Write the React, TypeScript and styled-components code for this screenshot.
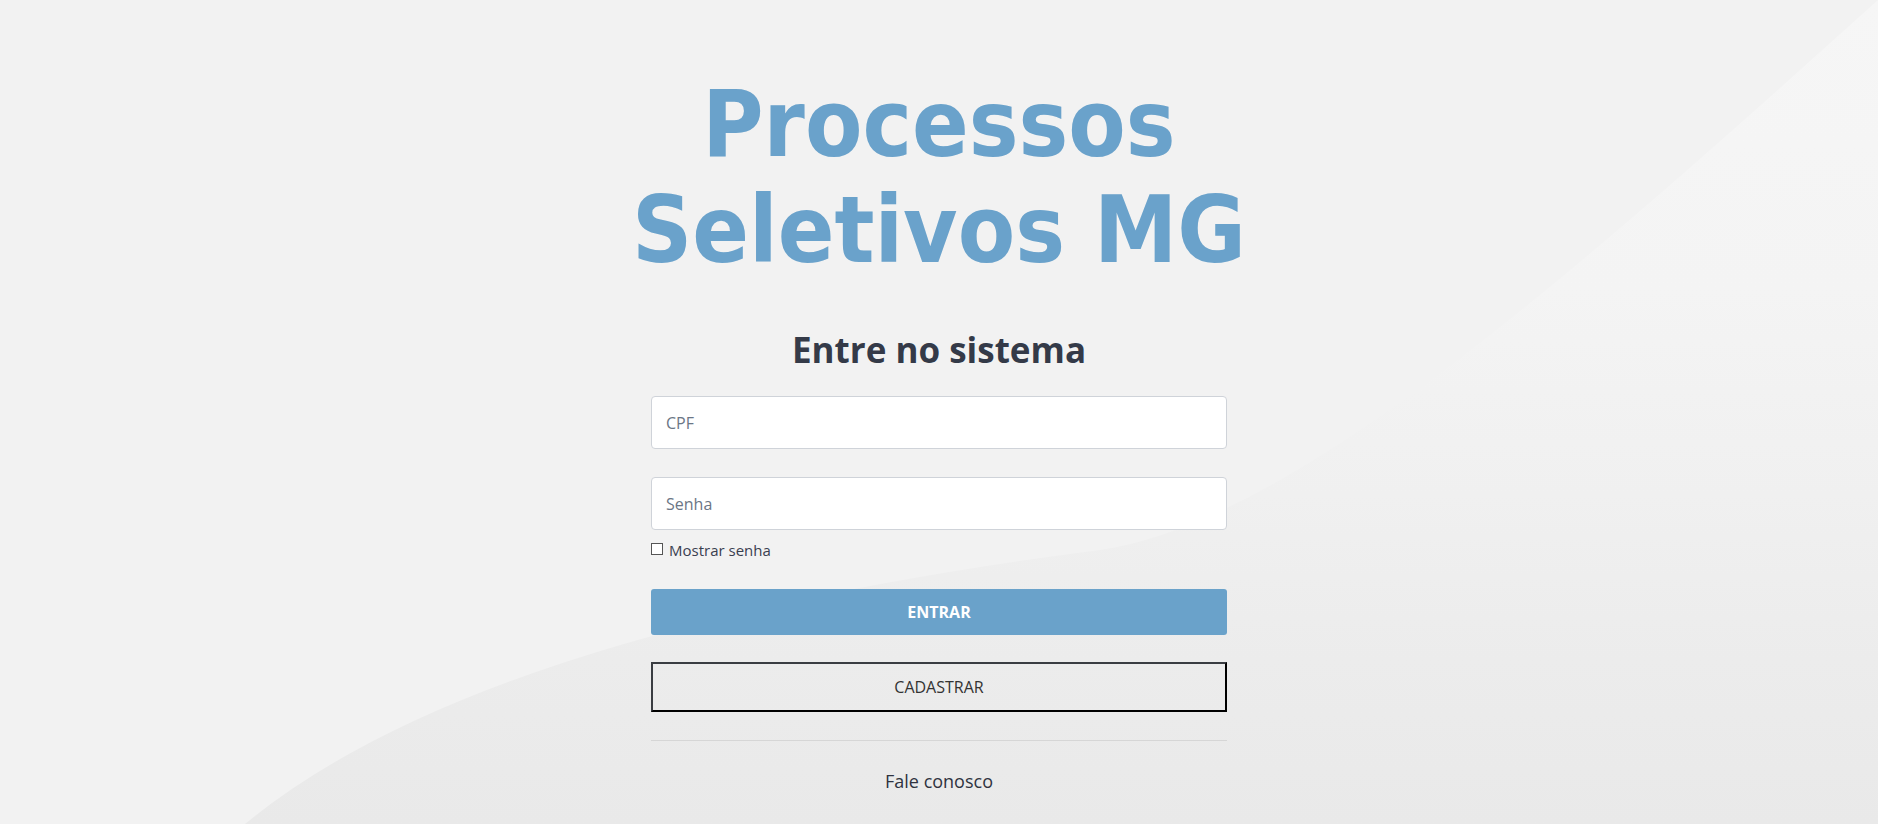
import React, { useState } from 'react';
import styled, { createGlobalStyle } from 'styled-components';

const GlobalStyle = createGlobalStyle`
  * {
    box-sizing: border-box;
  }
  html, body {
    margin: 0;
    padding: 0;
  }
  body {
    background: #f2f2f2;
    font-family: 'Open Sans', 'Liberation Sans', sans-serif;
    color: #333;
  }
`;

const Page = styled.div`
  position: relative;
  min-height: 100vh;
  overflow: hidden;
  background: #f2f2f2;
`;

const Wave = styled.svg`
  position: absolute;
  left: 0;
  top: 0;
  width: 100%;
  height: 100%;
  z-index: 0;
`;

const Content = styled.main`
  position: relative;
  z-index: 1;
  display: flex;
  flex-direction: column;
  align-items: center;
  padding-top: 71px;
`;

const Title = styled.h1`
  margin: 0;
  font-family: 'DejaVu Sans Condensed', 'DejaVu Sans', sans-serif;
  font-stretch: condensed;
  font-weight: 700;
  font-size: 93px;
  line-height: 106px;
  color: #6aa2cb;
  text-align: center;
`;

const Form = styled.form`
  width: 576px;
  display: flex;
  flex-direction: column;
  margin-top: 45px;
`;

const Heading = styled.h2`
  margin: 0 0 25px;
  font-size: 35px;
  line-height: 43px;
  font-weight: 700;
  color: #343a48;
  text-align: center;
`;

const Input = styled.input<{ $gap?: number }>`
  height: 53px;
  width: 100%;
  margin-top: ${(p) => p.$gap ?? 0}px;
  padding: 0 14px;
  border: 1px solid #cfd3d9;
  border-radius: 4px;
  background: #fff;
  font-family: 'Open Sans', sans-serif;
  font-size: 16px;
  color: #333;
  outline: none;
  &::placeholder {
    color: #6b7686;
  }
`;

const CheckRow = styled.label`
  display: flex;
  align-items: center;
  gap: 6px;
  margin-top: 10px;
  font-size: 15px;
  line-height: 20px;
  color: #3a4050;
  cursor: pointer;
`;

const Box = styled.span`
  width: 12px;
  height: 12px;
  border: 1px solid #555;
  background: #fff;
  flex-shrink: 0;
  margin-top: -3px;
`;

const PrimaryButton = styled.button`
  margin-top: 29px;
  height: 46px;
  width: 100%;
  border: none;
  border-radius: 3px;
  background: #6aa2ca;
  color: #fff;
  font-family: 'Open Sans', sans-serif;
  font-weight: 700;
  font-size: 16px;
  cursor: pointer;
`;

const OutlineButton = styled.button`
  margin-top: 27px;
  height: 50px;
  width: 100%;
  background: transparent;
  border: 2px solid #000;
  border-top-color: #3a3d42;
  border-left-color: #3a3d42;
  color: #333;
  font-family: 'Open Sans', sans-serif;
  font-size: 16px;
  cursor: pointer;
`;

const Divider = styled.hr`
  margin: 28px 0 0;
  border: none;
  border-top: 1px solid #d6d6d6;
  width: 100%;
`;

const Contact = styled.a`
  margin-top: 28px;
  font-size: 18px;
  line-height: 25px;
  color: #2f3340;
  text-align: center;
  text-decoration: none;
`;

const App = () => {
  const [show, setShow] = useState(false);

  return (
    <>
      <GlobalStyle />
      <Page>
        <Wave viewBox="0 0 1878 824" preserveAspectRatio="none">
          <defs>
            <linearGradient id="waveFill" x1="0" y1="0" x2="0" y2="824" gradientUnits="userSpaceOnUse">
              <stop offset="0" stopColor="#f6f6f6" />
              <stop offset="0.35" stopColor="#f4f4f4" />
              <stop offset="0.6" stopColor="#f0f0f0" />
              <stop offset="0.8" stopColor="#ececec" />
              <stop offset="1" stopColor="#e9e9e9" />
            </linearGradient>
          </defs>
          <path
            d="M245 824 Q480 630 1100 550 C1300 522 1600 250 1878 0 L1878 824 Z"
            fill="url(#waveFill)"
          />
        </Wave>
        <Content>
          <Title>
            Processos
            <br />
            Seletivos MG
          </Title>
          <Form onSubmit={(e) => e.preventDefault()}>
            <Heading>Entre no sistema</Heading>
            <Input placeholder="CPF" />
            <Input $gap={28} placeholder="Senha" type={show ? 'text' : 'password'} />
            <CheckRow onClick={() => setShow(!show)}>
              <Box />
              Mostrar senha
            </CheckRow>
            <PrimaryButton type="submit">ENTRAR</PrimaryButton>
            <OutlineButton type="button">CADASTRAR</OutlineButton>
            <Divider />
            <Contact href="#">Fale conosco</Contact>
          </Form>
        </Content>
      </Page>
    </>
  );
};

export default App;
